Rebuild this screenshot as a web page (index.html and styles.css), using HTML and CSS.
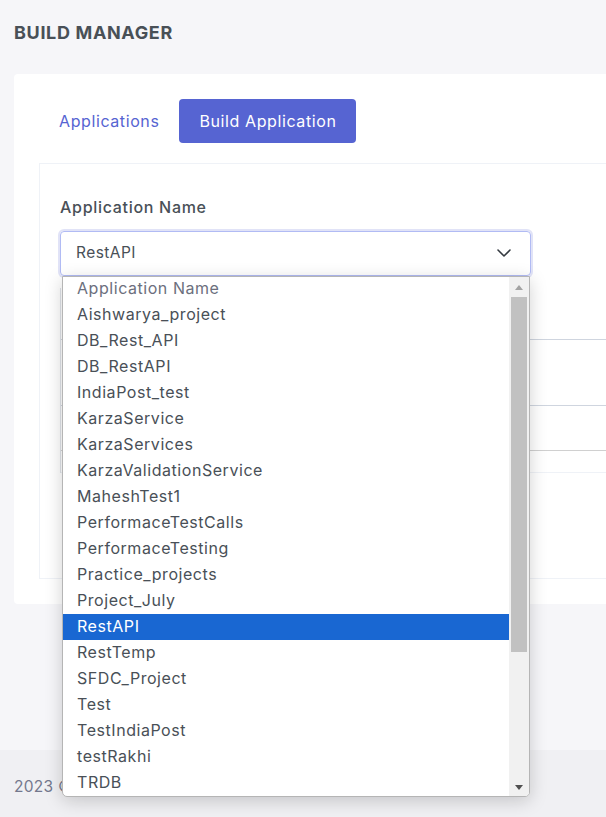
FILE: index.html
```html
<!DOCTYPE html>
<html lang="en">
<head>
<meta charset="utf-8">
<title>Build Manager</title>
<link rel="stylesheet" href="styles.css">
</head>
<body>
<div class="page">
  <main class="main">
    <h1 class="title">BUILD MANAGER</h1>
    <section class="card">
      <nav class="tabs">
        <a class="tab">Applications</a>
        <a class="tab active">Build Application</a>
      </nav>
      <div class="tab-content">
        <label class="label">Application Name</label>
        <div class="select-wrap">
          <div class="select">
            <span class="select-value">RestAPI</span>
            <svg class="chevron" width="14" height="8" viewBox="0 0 14 8"><path d="M1 1l6 6 6-6" fill="none" stroke="#343a40" stroke-width="1.6" stroke-linecap="round" stroke-linejoin="round"/></svg>
          </div>
          <div class="dropdown">
            <ul class="options">
              <li class="option placeholder">Application Name</li>
              <li class="option">Aishwarya_project</li>
              <li class="option">DB_Rest_API</li>
              <li class="option">DB_RestAPI</li>
              <li class="option">IndiaPost_test</li>
              <li class="option">KarzaService</li>
              <li class="option">KarzaServices</li>
              <li class="option">KarzaValidationService</li>
              <li class="option">MaheshTest1</li>
              <li class="option">PerformaceTestCalls</li>
              <li class="option">PerformaceTesting</li>
              <li class="option">Practice_projects</li>
              <li class="option">Project_July</li>
              <li class="option selected">RestAPI</li>
              <li class="option">RestTemp</li>
              <li class="option">SFDC_Project</li>
              <li class="option">Test</li>
              <li class="option">TestIndiaPost</li>
              <li class="option">testRakhi</li>
              <li class="option">TRDB</li>
            </ul>
            <div class="scrollbar">
              <div class="arrow-box top"><span class="arrow up"></span></div>
              <div class="track"><div class="thumb"></div></div>
              <div class="arrow-box bottom"><span class="arrow down"></span></div>
            </div>
          </div>
        </div>
        <div class="under">
          <div class="under-row r1"></div>
          <div class="under-row r2"></div>
          <div class="under-row r3"></div>
          <div class="under-row r4"></div>
        </div>
      </div>
    </section>
  </main>
  <footer class="footer">2023 © Build Manager</footer>
</div>
</body>
</html>
```

FILE: styles.css
```css
* { box-sizing: border-box; }
html, body { margin: 0; padding: 0; }
body {
  background: #f6f6f9;
  font-family: "Inter", "Open Sans", sans-serif;
  color: #495057;
  overflow: hidden;
}
.page {
  min-height: 817px;
  display: flex;
  flex-direction: column;
}
.main {
  flex: 1;
  padding: 0 0 0 14px;
}
.title {
  margin: 0;
  padding-top: 22px;
  height: 74px;
  font-size: 18px;
  font-weight: 700;
  color: #495057;
  letter-spacing: 0.65px;
}
.card {
  background: #fff;
  border-radius: 4px;
  margin-right: -60px;
  padding: 25px;
}
.tabs {
  display: flex;
  height: 44px;
  margin-bottom: 20px;
}
.tab {
  display: flex;
  align-items: center;
  padding: 0 20px 1px;
  font-size: 16px;
  letter-spacing: 0.6px;
  color: #5664d2;
  border-radius: 4px;
}
.tab.active {
  background: #5664d2;
  color: #fff;
}
.tab-content {
  border: 1px solid #eff2f7;
  padding: 32px 20px 105px 20px;
}
.label {
  display: block;
  font-size: 16px;
  font-weight: 500;
  letter-spacing: 0.7px;
  color: #495057;
  line-height: 22px;
  margin-bottom: 13px;
}
.select-wrap {
  position: relative;
  width: 471px;
}
.select {
  height: 45px;
  border: 1px solid #b1bbf4;
  border-radius: 4px;
  box-shadow: 0 0 0 2px rgba(86, 100, 210, 0.18);
  display: flex;
  align-items: center;
  justify-content: space-between;
  padding: 0 19px 3px 15px;
  font-size: 15.5px;
  letter-spacing: 0.45px;
  color: #495057;
}
.chevron { display: block; margin-top: 2px; }
.dropdown {
  position: absolute;
  left: 2px;
  top: 45px;
  width: 468px;
  height: 521px;
  background: #fff;
  border: 1px solid #b5b5b5;
  border-radius: 0 0 5px 5px;
  box-shadow: 0 4px 18px rgba(0, 0, 0, 0.18);
  display: flex;
  z-index: 5;
  overflow: hidden;
}
.options {
  list-style: none;
  margin: 0;
  padding: 0;
  flex: 1;
}
.option {
  height: 26px;
  line-height: 24px;
  padding-left: 14px;
  font-size: 16px;
  letter-spacing: 0.55px;
  color: #495057;
  white-space: nowrap;
}
.option.placeholder { color: #6c6f7d; margin-top: -1px; }
.option.selected {
  background: #1967d2;
  color: #fff;
}
.scrollbar {
  width: 20px;
  background: #f1f1f1;
  display: flex;
  flex-direction: column;
  align-items: center;
}
.arrow-box {
  height: 20px;
  width: 100%;
  display: flex;
  align-items: center;
  justify-content: center;
}
.arrow {
  width: 0;
  height: 0;
  border-left: 4.5px solid transparent;
  border-right: 4.5px solid transparent;
}
.arrow.up { border-bottom: 5px solid #a3a3a3; }
.arrow.down { border-top: 5px solid #505050; margin-top: 2px; }
.track {
  flex: 1;
  width: 100%;
  padding: 0 2px;
}
.thumb {
  height: 355px;
  background: #c1c1c1;
}
.under {
  margin-top: 12px;
  border-left: 1px solid #dfe2e8;
  margin-right: -100px;
}
.under-row { border-bottom: 1px solid #cfd5df; }
.under-row.r1 { height: 52px; }
.under-row.r2 { height: 66px; }
.under-row.r3 { height: 45px; border-bottom-color: #d0d0d0; }
.under-row.r4 { height: 22px; border-bottom-color: #eff2f7; }
.footer {
  background: #f0f0f3;
  height: 67px;
  padding: 27px 0 0 14px;
  font-size: 15.5px;
  letter-spacing: 0.3px;
  color: #74788d;
}
```
